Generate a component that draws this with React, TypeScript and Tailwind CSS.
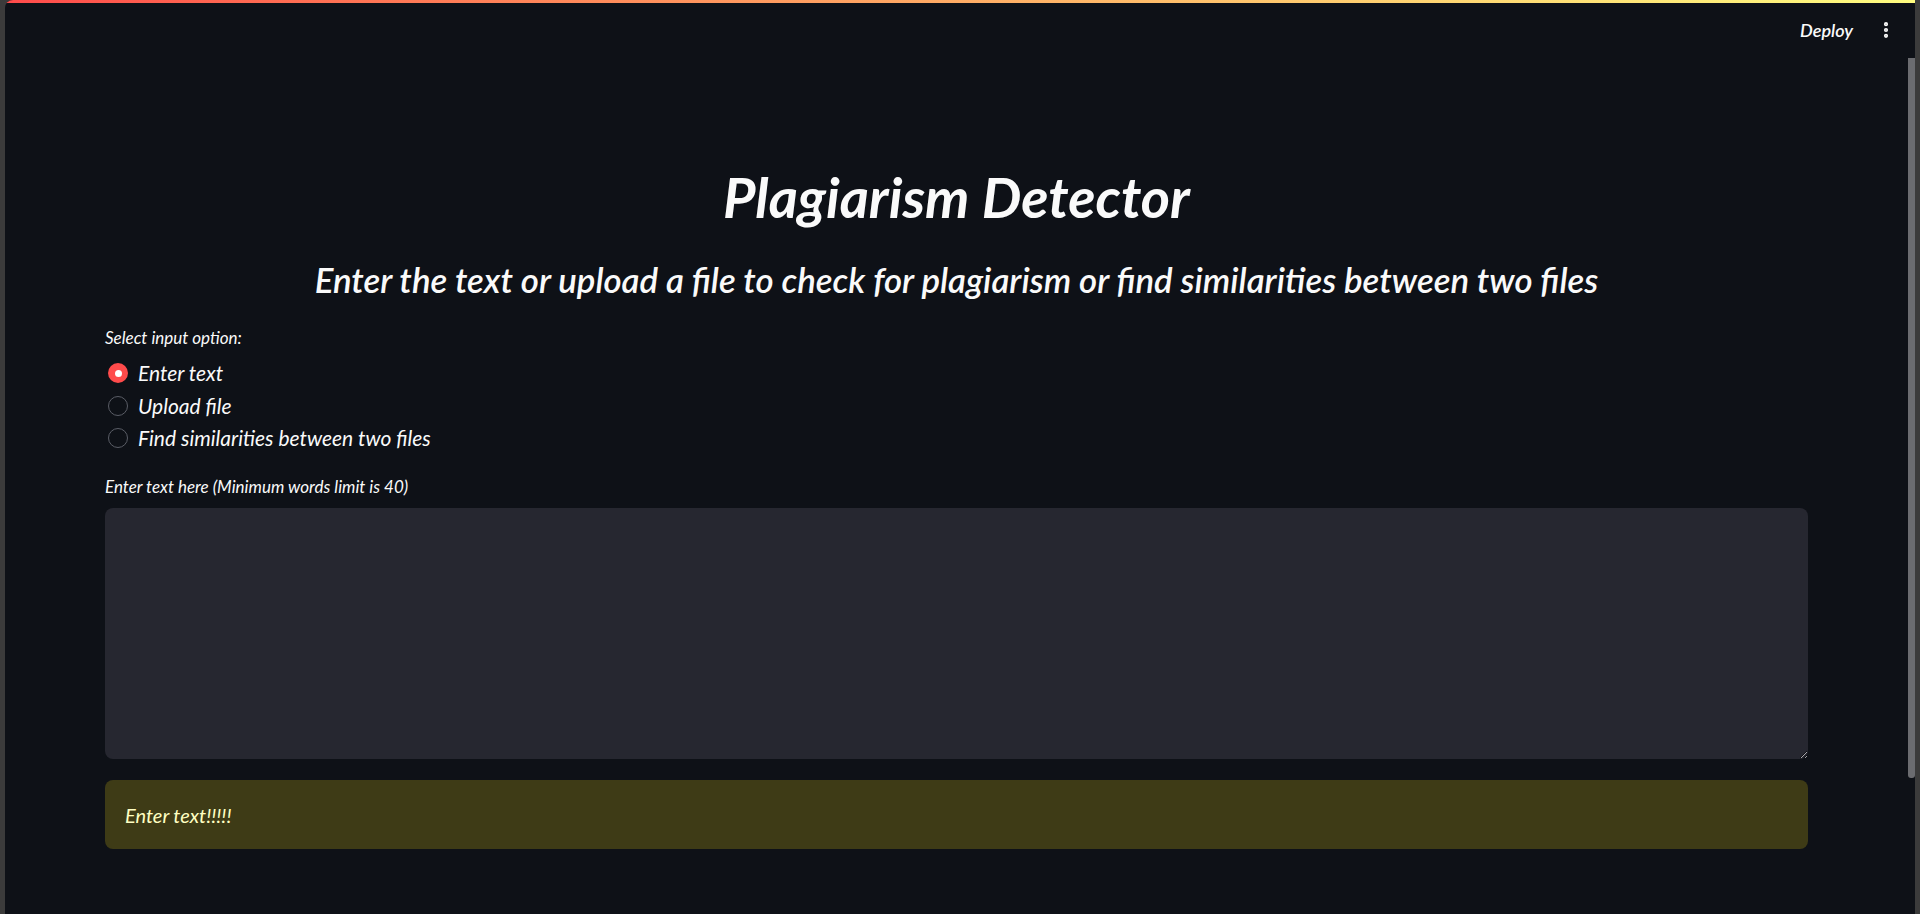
import { EllipsisVertical } from "lucide-react";

const options = ["Enter text", "Upload file", "Find similarities between two files"];

const Header = () => (
  <header className="flex h-[54px] items-center justify-end gap-[23px] pr-[12px]">
    <span className="text-[18px] font-semibold italic text-[#fafafa]">Deploy</span>
    <EllipsisVertical className="h-[20px] w-[20px] text-[#fafafa]" strokeWidth={3} aria-hidden="true" />
  </header>
);

const RadioGroup = () => (
  <div className="mt-[27px] flex flex-col">
    <span className="text-[17px] italic leading-[21px] text-[#fafafa]">Select input option:</span>
    <div className="mt-[13px] flex flex-col gap-[8.5px]">
      {options.map((opt, i) => (
        <label key={opt} className="flex h-[24px] items-center gap-[10px] pl-[3px]">
          {i === 0 ? (
            <span className="flex h-[20px] w-[20px] items-center justify-center rounded-full bg-[#ff4b4b]">
              <span className="h-[7px] w-[7px] rounded-full bg-white" />
            </span>
          ) : (
            <span className="h-[20px] w-[20px] rounded-full border border-[#5a5d66]" />
          )}
          <span className="text-[21px] italic text-[#fafafa]">{opt}</span>
        </label>
      ))}
    </div>
  </div>
);

export default function App() {
  return (
    <div
      className="flex h-[914px] w-full overflow-hidden bg-[#3b3b3b] px-[5px]"
      style={{ fontFamily: "Lato, 'Noto Sans', sans-serif" }}
    >
      <div className="flex flex-1 flex-col overflow-hidden rounded-tl-[8px] bg-[#0e1117]">
        <div className="h-[3px] w-full bg-gradient-to-r from-[#ff4b4b] to-[#fffd80]" />
        <div className="flex flex-1">
          <div className="flex flex-1 flex-col">
            <Header />
            <main className="flex flex-col px-[100px] pt-[110px]">
              <h1 className="text-center text-[56px] font-bold italic leading-[60px] text-[#fafafa]">
                Plagiarism Detector
              </h1>
              <h2 className="mt-[33px] text-center text-[34.75px] font-semibold italic leading-[40px] text-[#fafafa]">
                Enter the text or upload a file to check for plagiarism or find similarities between two files
              </h2>
              <RadioGroup />
              <span className="mt-[26px] text-[17px] italic leading-[21px] text-[#fafafa]">
                Enter text here (Minimum words limit is 40)
              </span>
              <textarea className="mt-[11px] h-[251px] w-full resize-y rounded-[8px] bg-[#262730] p-4 text-[#fafafa] outline-none" />
              <div className="mt-[21px] flex h-[69px] items-center rounded-[8px] bg-[#3e3b16] px-[20px]">
                <span className="text-[20px] italic text-[#ffffc2]">Enter text!!!!!</span>
              </div>
            </main>
          </div>
          <div className="flex w-[7px] flex-col pt-[55px]">
            <div className="h-[720px] rounded-b-[3px] bg-[#6b6c70]" />
          </div>
        </div>
      </div>
    </div>
  );
}
